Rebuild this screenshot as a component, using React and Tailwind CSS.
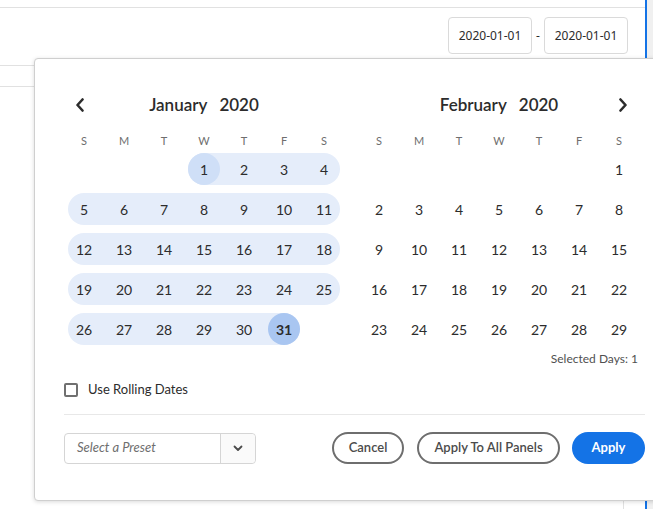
import React from 'react';

const weekdays = ['S', 'M', 'T', 'W', 'T', 'F', 'S'];

function buildWeeks(offset, count) {
  const cells = [];
  for (let i = 0; i < offset; i++) cells.push(null);
  for (let d = 1; d <= count; d++) cells.push(d);
  while (cells.length % 7 !== 0) cells.push(null);
  const weeks = [];
  for (let i = 0; i < cells.length; i += 7) weeks.push(cells.slice(i, i + 7));
  return weeks;
}

function Chevron({ dir }) {
  return (
    <svg width="10" height="14" viewBox="0 0 10 14" fill="none">
      <path
        d={dir === 'left' ? 'M7.5 1.5 L2.5 7 L7.5 12.5' : 'M2.5 1.5 L7.5 7 L2.5 12.5'}
        stroke="#2c2c2c"
        strokeWidth="2.6"
        strokeLinecap="round"
        strokeLinejoin="round"
      />
    </svg>
  );
}

function DayCell({ day, start, end }) {
  let cls = 'w-8 h-8 flex items-center justify-center rounded-full text-[14px] text-[#2c2c2c]';
  if (start) cls += ' bg-[#cfdff7]';
  if (end) cls += ' bg-[#a9c6f1] font-bold text-[#1b3766]';
  return <div className={cls}>{day}</div>;
}

function Week({ week, selected }) {
  if (!selected) {
    return (
      <div className="flex gap-2 h-8">
        {week.map((d, i) => (
          <DayCell key={i} day={d} />
        ))}
      </div>
    );
  }
  const first = week.findIndex((d) => d !== null);
  let last = week.length - 1;
  while (week[last] === null) last--;
  return (
    <div className="flex gap-2 h-8">
      {week.slice(0, first).map((_, i) => (
        <div key={'s' + i} className="w-8" />
      ))}
      <div className="flex gap-2 bg-[#e5edfa] rounded-full">
        {week.slice(first, last + 1).map((d) => (
          <DayCell key={d} day={d} start={d === 1} end={d === 31} />
        ))}
      </div>
    </div>
  );
}

function Month({ name, year, offset, count, nav, selected }) {
  const weeks = buildWeeks(offset, count);
  return (
    <div className="w-[272px] flex flex-col">
      <div className="flex items-center h-6">
        <div className="w-6 flex justify-center">{nav === 'left' && <Chevron dir="left" />}</div>
        <div className="flex-1 flex justify-center gap-3 text-[17px] font-semibold text-[#2c2c2c]">
          <span>{name}</span>
          <span>{year}</span>
        </div>
        <div className="w-6 flex justify-center">{nav === 'right' && <Chevron dir="right" />}</div>
      </div>
      <div className="flex gap-2 h-6 mt-3 items-center">
        {weekdays.map((w, i) => (
          <div key={i} className="w-8 text-center text-[11px] text-[#6e6e6e]">
            {w}
          </div>
        ))}
      </div>
      <div className="flex flex-col gap-2">
        {weeks.map((wk, i) => (
          <Week key={i} week={wk} selected={selected} />
        ))}
      </div>
    </div>
  );
}

function DateBox({ value }) {
  return (
    <div className="w-[84px] h-[37px] border border-[#dadada] rounded-[4px] flex items-center justify-center text-[12px] text-[#2c2c2c]">
      {value}
    </div>
  );
}

export default function App() {
  return (
    <div className="relative w-[653px] h-[509px] overflow-hidden bg-white flex" style={{ fontFamily: 'Lato, "Noto Sans", sans-serif' }}>
      <div className="w-[645px] flex flex-col">
        <div className="h-2 border-b border-[#e1e1e1]" />
        <div className="flex justify-end items-center pr-[17px] mt-[9px]" style={{ fontFamily: '"Noto Sans", sans-serif' }}>
          <DateBox value="2020-01-01" />
          <span className="w-3 text-center text-[12px] text-[#2c2c2c]">-</span>
          <DateBox value="2020-01-01" />
        </div>
        <div className="mt-[11px] h-px bg-[#e1e1e1]" />
        <div className="mt-5 h-px bg-[#e1e1e1]" />
        <div className="flex-1 flex">
          <div className="w-[624px] border-r border-[#e1e1e1]" />
        </div>
      </div>
      <div className="w-2 border-l-2 border-[#1473e6] bg-[#f0f0f0]" />

      <div className="absolute left-[34px] top-[58px] w-[641px] bg-white border border-[#cfcfcf] rounded-[4px] shadow-[0_1px_4px_rgba(0,0,0,0.15)] px-[29px] pt-[34px] pb-[36px]">
        <div className="flex ml-1 gap-[23px]">
          <Month name="January" year="2020" offset={3} count={31} nav="left" selected />
          <Month name="February" year="2020" offset={6} count={29} nav="right" />
        </div>
        <div className="mt-[6px] pr-[7px] text-right text-[12px] leading-4 text-[#505050]">Selected Days: 1</div>
        <label className="mt-[13px] h-5 flex items-center gap-[10px]">
          <span className="w-[14px] h-[14px] border-2 border-[#707070] rounded-[2px]" />
          <span className="text-[13px] text-[#2c2c2c]">Use Rolling Dates</span>
        </label>
        <div className="mt-[14px] h-px bg-[#e8e8e8]" />
        <div className="mt-[17px] flex items-center">
          <div className="w-[192px] h-[31px] border border-[#d5d5d5] rounded-[4px] flex">
            <div className="flex-1 flex items-center pl-3 text-[13px] italic text-[#6e6e6e]">Select a Preset</div>
            <div className="w-[35px] border-l border-[#d5d5d5] bg-[#fafafa] rounded-r-[4px] flex items-center justify-center">
              <svg width="10" height="7" viewBox="0 0 10 7" fill="none">
                <path d="M1.5 1.5 L5 5 L8.5 1.5" stroke="#4b4b4b" strokeWidth="1.8" strokeLinecap="round" strokeLinejoin="round" />
              </svg>
            </div>
          </div>
          <div className="flex-1" />
          <button className="w-[72px] h-8 rounded-full border-2 border-[#6e6e6e] text-[13px] font-semibold text-[#4b4b4b]">Cancel</button>
          <button className="ml-[13px] w-[143px] h-8 rounded-full border-2 border-[#6e6e6e] text-[13px] font-semibold text-[#4b4b4b]">Apply To All Panels</button>
          <button className="ml-3 w-[73px] h-8 rounded-full bg-[#1473e6] text-[13px] font-bold text-white">Apply</button>
        </div>
      </div>
    </div>
  );
}
